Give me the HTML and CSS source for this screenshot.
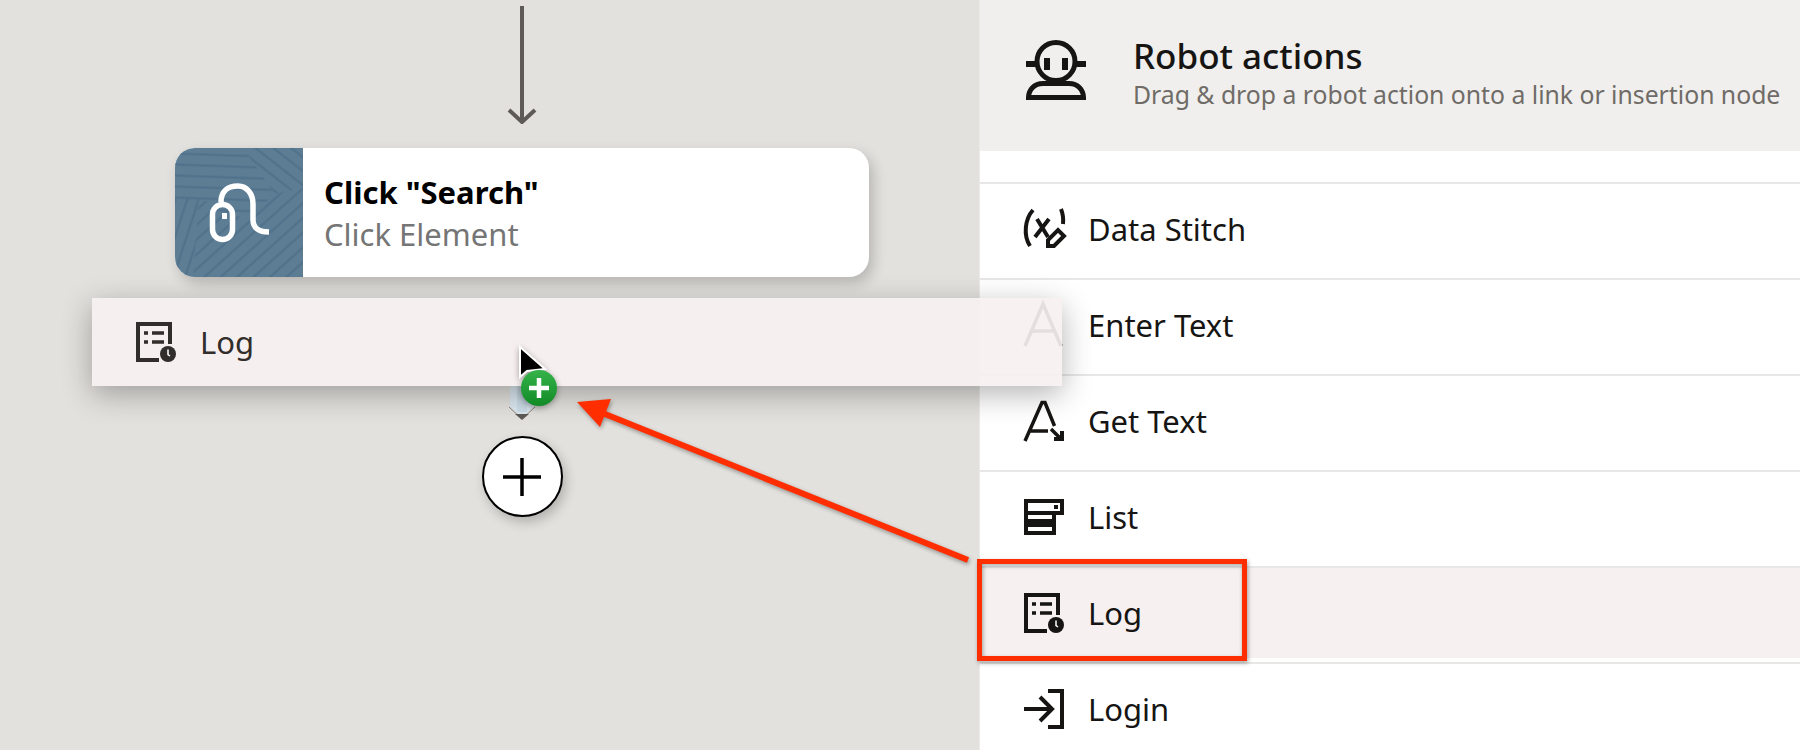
FILE: index.html
```html
<!DOCTYPE html>
<html lang="en">
<head>
  <meta charset="UTF-8">
  <meta name="viewport" content="width=device-width, initial-scale=1.0">
  <title>Robot actions</title>
  <link rel="stylesheet" href="styles.css">
</head>
<body>
  <main class="canvas">
    <svg class="flow-arrow" width="30" height="118" viewBox="0 0 30 118">
      <path d="M15 0V116M2 104L15 116L28 104" />
    </svg>

    <div class="node">
      <svg class="node-image" width="128" height="129" viewBox="0 0 128 129">
        <defs>
          <pattern id="stripes" width="11" height="11" patternUnits="userSpaceOnUse">
            <path d="M0 5.500H11" stroke="#4f708a" stroke-width="2" />
          </pattern>
          <pattern id="stripesA" href="#stripes" patternTransform="rotate(-42)" />
          <pattern id="stripesB" href="#stripes" patternTransform="rotate(2)" />
          <pattern id="stripesC" href="#stripes" patternTransform="rotate(38)" />
          <pattern id="stripesD" href="#stripes" patternTransform="rotate(-72)" />
        </defs>
        <rect width="128" height="129" fill="#5c7d94" />
        <path d="M0 0H68L100 46L72 72L0 50Z" fill="url(#stripesB)" />
        <path d="M68 0H128V40L100 46Z" fill="url(#stripesC)" />
        <path d="M0 50H24L18 129H0Z" fill="url(#stripesD)" />
        <path d="M24 50L72 72L100 46L128 40V129H18Z" fill="url(#stripesA)" />
        <g fill="none" stroke="#fff" stroke-width="5.500">
          <rect x="37.500" y="56.500" width="20" height="35" rx="10" />
          <path d="M46 54C46 44 52 38 63 38C72 38 78 46 78 56V72C78 80 84 84 94 84" />
        </g>
        <rect x="47" y="65" width="5" height="6" fill="#fff" />
      </svg>
      <div class="node-text">
        <div class="node-title">Click "Search"</div>
        <div class="node-type">Click Element</div>
      </div>
    </div>

    <svg class="drop-link" width="30" height="120" viewBox="0 0 30 120">
      <path d="M15 0V46" stroke="#e9e5e4" stroke-width="1" fill="none" />
      <path d="M3 86H27V106L15 118L3 106Z" fill="#dbe8f1" />
      <rect x="10" y="86" width="10" height="26" fill="#cddde8" />
      <path d="M2 107L15 119L28 107" stroke="#8a8682" stroke-width="1" fill="none" />
      <path d="M8 114H22L15 120Z" fill="#5e5a57" />
    </svg>

    <button class="add-node">
      <svg width="38" height="38" viewBox="0 0 38 38">
        <path d="M0 19H38M19 0V38" stroke="#000" stroke-width="3.500" />
      </svg>
    </button>
  </main>

  <aside class="panel">
    <header class="panel-header">
      <svg class="robot-icon" width="60" height="60" viewBox="0 0 60 60">
        <g fill="none" stroke="#161513">
          <circle cx="30" cy="21.500" r="19" stroke-width="5" />
          <path d="M0 24H10M50 24H60" stroke-width="6" />
          <path d="M2.500 57.500C2.500 50 8 43.500 17 43.500H43C52 43.500 57.500 50 57.500 57.500Z" stroke-width="5" />
        </g>
        <rect x="18" y="18" width="6" height="12" fill="#161513" />
        <rect x="36" y="18" width="6" height="12" fill="#161513" />
      </svg>
      <div>
        <h1 class="panel-title">Robot actions</h1>
        <p class="panel-subtitle">Drag &amp; drop a robot action onto a link or insertion node</p>
      </div>
    </header>

    <ul class="action-list">
      <li class="action">
        <svg class="action-icon" width="40" height="40" viewBox="0 0 40 40">
          <path d="M9 1C1 10 -1 26 6 37M37 0C39 5 39.500 10 39 15" fill="none" stroke="#161513" stroke-width="4" />
          <path d="M13 10L24 28M25 10L11 28" fill="none" stroke="#161513" stroke-width="4" />
          <path d="M24 37V31L34 21L40 27L30 37Z" fill="none" stroke="#161513" stroke-width="4" />
        </svg>
        Data Stitch
      </li>
      <li class="action">
        <svg class="action-icon" width="40" height="40" viewBox="0 0 40 40">
          <path d="M1 41L19 -1L37 41M8 26H30" fill="none" stroke="#161513" stroke-width="3.500" />
        </svg>
        Enter Text
      </li>
      <li class="action">
        <svg class="action-icon" width="40" height="40" viewBox="0 0 40 40">
          <path d="M1 40L18 1.500H21L30.500 25M6 30H24" fill="none" stroke="#161513" stroke-width="3.500" />
          <path d="M27 28L37 38" fill="none" stroke="#161513" stroke-width="3.500" />
          <path d="M40 30V40H30V36H36V30Z" fill="#161513" />
        </svg>
        Get Text
      </li>
      <li class="action">
        <svg class="action-icon" width="40" height="36" viewBox="0 0 40 36">
          <path d="M2 2H38V14H2Z" fill="none" stroke="#161513" stroke-width="4" />
          <rect x="30" y="6" width="4" height="4" fill="#161513" />
          <path d="M0 16H32V36H0ZM4 16V20H28V16ZM4 28V32H28V28Z" fill="#161513" fill-rule="evenodd" />
        </svg>
        List
      </li>
      <li class="action action-active">
        <svg class="action-icon" width="40" height="40" viewBox="0 0 40 40">
          <use href="#log-icon" />
        </svg>
        Log
      </li>
      <li class="action">
        <svg class="action-icon" width="40" height="40" viewBox="0 0 40 40">
          <path d="M24 2H38V38H24" fill="none" stroke="#161513" stroke-width="4" />
          <path d="M0 20H27M16 8L28 20L16 32" fill="none" stroke="#161513" stroke-width="4" />
        </svg>
        Login
      </li>
    </ul>
  </aside>

  <!-- item being dragged -->
  <div class="drag-ghost">
    <svg class="action-icon" width="40" height="40" viewBox="0 0 40 40">
      <g id="log-icon">
        <path d="M23 38H2V2H34V22" fill="none" stroke="currentColor" stroke-width="4" />
        <path d="M8 11H12M16 11H28M8 20H12M16 20H28" fill="none" stroke="currentColor" stroke-width="3.500" />
        <circle cx="32" cy="32" r="8" fill="currentColor" />
        <path d="M32 27.500V32.500L34 34" fill="none" stroke="#fff" stroke-width="1.500" />
      </g>
    </svg>
    Log
  </div>

  <svg class="cursor" width="56" height="62" viewBox="0 0 56 62">
    <defs>
      <linearGradient id="green" x1="0" y1="0" x2="0" y2="1">
        <stop offset="0" stop-color="#35b34a" />
        <stop offset="1" stop-color="#118a26" />
      </linearGradient>
    </defs>
    <path d="M2 2V32L9 26L27 24Z" fill="#000" stroke="#fff" stroke-width="2" />
    <circle cx="21" cy="43" r="18" fill="url(#green)" />
    <path d="M11 43H31M21 33V53" stroke="#fff" stroke-width="4.500" />
  </svg>

  <!-- red callout drawn on the screenshot -->
  <svg class="callout" width="1800" height="750" viewBox="0 0 1800 750">
    <path d="M968 560L600 412" stroke="#ff2e00" stroke-width="6" fill="none" />
    <path d="M577 402L611 399L600 427Z" fill="#ff2e00" />
    <rect x="979.500" y="561.500" width="265" height="97" fill="none" stroke="#ff2e00" stroke-width="5" />
  </svg>
</body>
</html>
```

FILE: styles.css
```css
html, body {
  height: 100%;
}
body {
  font-family: "Noto Sans", "Open Sans", sans-serif;
  display: flex;
  height: 750px;
  margin: 0;
  overflow: hidden;
  color: #161513;
  background: #fff;
}
.canvas {
  display: flex;
  flex-direction: column;
  align-items: center;
  box-sizing: border-box;
  flex: 0 0 979px;
  padding: 6px 0 0 65px;
  background: #e2e1dd;
}
.flow-arrow {
  fill: none;
  stroke: #5e5a57;
  stroke-width: 4;
}
.node {
  display: flex;
  align-items: center;
  width: 694px;
  height: 129px;
  margin-top: 24px;
  border-radius: 20px;
  overflow: hidden;
  background: #fff;
  box-shadow: 4px 6px 14px rgba(0, 0, 0, 0.2);
}
.node-image {
  flex: none;
}
.node-text {
  padding-left: 21px;
}
.node-title {
  font-size: 31px;
  font-weight: 700;
  line-height: 42px;
  color: #000;
}
.node-type {
  font-size: 31px;
  line-height: 42px;
  color: #757575;
}
.drop-link {
  flex: none;
  margin-top: 23px;
}
.add-node {
  display: flex;
  align-items: center;
  justify-content: center;
  box-sizing: border-box;
  width: 81px;
  height: 81px;
  margin-top: 16px;
  padding: 0;
  border: 2.5px solid #000;
  border-radius: 50%;
  background: #fff;
  box-shadow: 3px 5px 12px rgba(0, 0, 0, 0.22);
}
.panel {
  flex: 1;
  min-width: 0;
  border-left: 1px solid #eceae8;
}
.panel-header {
  display: flex;
  align-items: flex-start;
  gap: 47px;
  box-sizing: border-box;
  height: 151px;
  padding: 35px 0 0 46px;
  background: #f0efed;
}
.robot-icon {
  flex: none;
  margin-top: 5px;
}
.panel-title {
  margin: 0;
  font-size: 35px;
  font-weight: 500;
  line-height: 42px;
}
.panel-subtitle {
  margin: 0;
  font-size: 24.75px;
  line-height: 36px;
  white-space: nowrap;
  color: #6f6b67;
}
.action-list {
  margin: 31px 0 0;
  padding: 0;
  list-style: none;
}
.action {
  display: flex;
  align-items: center;
  gap: 24px;
  box-sizing: border-box;
  height: 96px;
  padding: 0 0 4px 44px;
  border-top: 2px solid #e8e7e5;
  font-size: 31px;
}
.action-active {
  background: linear-gradient(#f6f0f0, #f6f0f0) no-repeat;
  background-size: 100% 90px;
}
.action-icon {
  flex: none;
  overflow: visible;
}
.drag-ghost {
  position: absolute;
  left: 92px;
  top: 298px;
  display: flex;
  align-items: center;
  gap: 24px;
  box-sizing: border-box;
  width: 970px;
  height: 88px;
  padding-left: 44px;
  font-size: 31px;
  color: #312d2a;
  background: rgba(247, 240, 240, 0.92);
  box-shadow: 0 8px 30px rgba(0, 0, 0, 0.3);
}
.cursor {
  position: absolute;
  left: 518px;
  top: 345px;
  filter: drop-shadow(0 2px 3px rgba(0, 0, 0, 0.35));
}
.callout {
  position: absolute;
  left: 0;
  top: 0;
  filter: drop-shadow(1px 2px 2px rgba(0, 0, 0, 0.35));
}
```
